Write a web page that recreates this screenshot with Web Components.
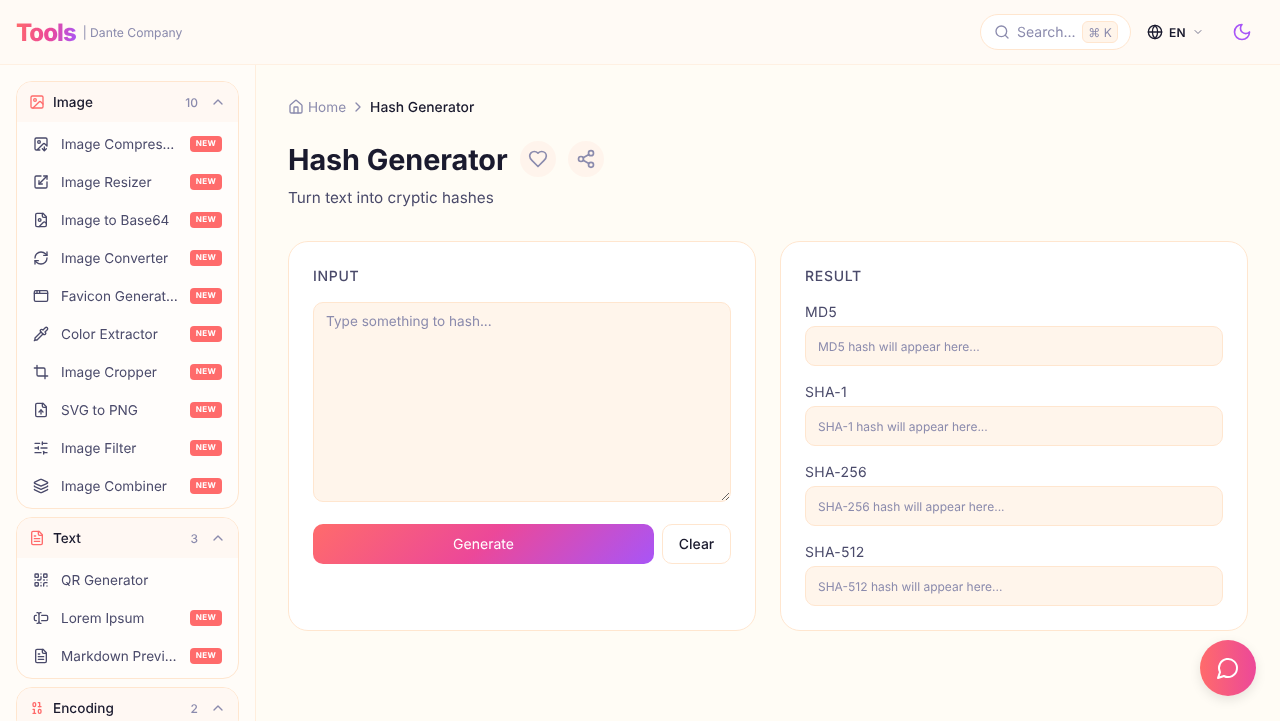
<!DOCTYPE html>
<html lang="en">
<head>
<meta charset="utf-8">
<title>Hash Generator</title>
<style>
html, body {
	margin: 0;
	height: 100%;
	overflow: hidden;
}
body {
	font-family: Inter, "Liberation Sans", sans-serif;
	text-rendering: geometricPrecision;
	will-change: transform;
	color: #1a1a2e;
	background: #fffcf5;
	display: flex;
	flex-direction: column;
}
</style>
</head>
<body>
<top-bar></top-bar>
<div style="display:flex;flex:1;min-height:0">
	<side-bar>
		<tool-group name="Image" icon="image" count="10">
			<tool-item icon="image-down" new>Image Compressor</tool-item>
			<tool-item icon="scaling" new>Image Resizer</tool-item>
			<tool-item icon="file-image" new>Image to Base64</tool-item>
			<tool-item icon="refresh" new>Image Converter</tool-item>
			<tool-item icon="app-window" new>Favicon Generator</tool-item>
			<tool-item icon="pipette" new>Color Extractor</tool-item>
			<tool-item icon="crop" new>Image Cropper</tool-item>
			<tool-item icon="file-up" new>SVG to PNG</tool-item>
			<tool-item icon="sliders" new>Image Filter</tool-item>
			<tool-item icon="layers" new>Image Combiner</tool-item>
		</tool-group>
		<tool-group name="Text" icon="file-text" count="3">
			<tool-item icon="qr">QR Generator</tool-item>
			<tool-item icon="text-cursor" new>Lorem Ipsum</tool-item>
			<tool-item icon="file-text" new>Markdown Preview</tool-item>
		</tool-group>
		<tool-group name="Encoding" icon="binary" count="2"></tool-group>
	</side-bar>
	<hash-page></hash-page>
</div>
<chat-fab></chat-fab>

<script>
(() => {
	const FILE = `<path d="M15 2H6a2 2 0 0 0-2 2v16a2 2 0 0 0 2 2h12a2 2 0 0 0 2-2V7Z"/><path d="M14 2v4a2 2 0 0 0 2 2h4"/>`;
	const ICONS = {
		image: `<rect x="3" y="3" width="18" height="18" rx="2"/><circle cx="9" cy="9" r="2"/><path d="m21 15-3.086-3.086a2 2 0 0 0-2.828 0L6 21"/>`,
		"image-down": `<path d="M10.3 21H5a2 2 0 0 1-2-2V5a2 2 0 0 1 2-2h14a2 2 0 0 1 2 2v10l-3.1-3.1a2 2 0 0 0-2.814.014L6 21"/><path d="m14 19 3 3v-5.5"/><path d="m17 22 3-3"/><circle cx="9" cy="9" r="2"/>`,
		scaling: `<path d="M12 3H5a2 2 0 0 0-2 2v14a2 2 0 0 0 2 2h14a2 2 0 0 0 2-2v-7"/><path d="M14 15H9v-5"/><path d="M16 3h5v5"/><path d="M21 3 9 15"/>`,
		"file-image": FILE + `<circle cx="10" cy="12" r="2"/><path d="m20 17-1.296-1.296a2.41 2.41 0 0 0-3.408 0L9 22"/>`,
		refresh: `<path d="M3 12a9 9 0 0 1 9-9 9.75 9.75 0 0 1 6.74 2.74L21 8"/><path d="M21 3v5h-5"/><path d="M21 12a9 9 0 0 1-9 9 9.75 9.75 0 0 1-6.74-2.74L3 16"/><path d="M8 16H3v5"/>`,
		"app-window": `<rect x="2" y="4" width="20" height="16" rx="2"/><path d="M10 4v4"/><path d="M2 8h20"/><path d="M6 4v4"/>`,
		pipette: `<path d="m2 22 1-1h3l9-9"/><path d="M3 21v-3l9-9"/><path d="m15 6 3.4-3.4a2.1 2.1 0 1 1 3 3L18 9l.4.4a2.1 2.1 0 1 1-3 3l-3.8-3.8a2.1 2.1 0 1 1 3-3l.4.4Z"/>`,
		crop: `<path d="M6 2v14a2 2 0 0 0 2 2h14"/><path d="M18 22V8a2 2 0 0 0-2-2H2"/>`,
		"file-up": FILE + `<path d="M12 12v6"/><path d="m15 15-3-3-3 3"/>`,
		sliders: `<path d="M10 5H3"/><path d="M12 19H3"/><path d="M14 3v4"/><path d="M16 17v4"/><path d="M21 12h-9"/><path d="M21 19h-5"/><path d="M21 5h-7"/><path d="M8 10v4"/><path d="M8 12H3"/>`,
		layers: `<path d="M12.83 2.18a2 2 0 0 0-1.66 0L2.6 6.08a1 1 0 0 0 0 1.83l8.58 3.91a2 2 0 0 0 1.66 0l8.58-3.9a1 1 0 0 0 0-1.83z"/><path d="M2 12a1 1 0 0 0 .58.91l8.6 3.91a2 2 0 0 0 1.65 0l8.58-3.9A1 1 0 0 0 22 12"/><path d="M2 17a1 1 0 0 0 .58.91l8.6 3.91a2 2 0 0 0 1.65 0l8.58-3.9A1 1 0 0 0 22 17"/>`,
		"file-text": FILE + `<path d="M10 9H8"/><path d="M16 13H8"/><path d="M16 17H8"/>`,
		qr: `<rect x="3" y="3" width="5" height="5" rx="1"/><rect x="16" y="3" width="5" height="5" rx="1"/><rect x="3" y="16" width="5" height="5" rx="1"/><path d="M21 16h-3a2 2 0 0 0-2 2v3"/><path d="M21 21v.01"/><path d="M12 7v3a2 2 0 0 1-2 2H7"/><path d="M3 12h.01"/><path d="M12 3h.01"/><path d="M12 16v.01"/><path d="M16 12h1"/><path d="M21 12v.01"/><path d="M12 21v-1"/>`,
		"text-cursor": `<path d="M12 20h-1a2 2 0 0 1-2-2 2 2 0 0 1-2 2H6"/><path d="M13 8h7a2 2 0 0 1 2 2v4a2 2 0 0 1-2 2h-7"/><path d="M5 16H4a2 2 0 0 1-2-2v-4a2 2 0 0 1 2-2h1"/><path d="M6 4h1a2 2 0 0 1 2 2 2 2 0 0 1 2-2h1"/><path d="M9 6v12"/>`,
		binary: `<rect x="14" y="14" width="4" height="6" rx="2"/><rect x="6" y="4" width="4" height="6" rx="2"/><path d="M6 20h4"/><path d="M14 10h4"/><path d="M6 14h2v6"/><path d="M14 4h2v6"/>`,
		search: `<path d="m21 21-4.34-4.34"/><circle cx="11" cy="11" r="8"/>`,
		globe: `<circle cx="12" cy="12" r="10"/><path d="M12 2a14.5 14.5 0 0 0 0 20 14.5 14.5 0 0 0 0-20"/><path d="M2 12h20"/>`,
		"chevron-down": `<path d="m6 9 6 6 6-6"/>`,
		"chevron-up": `<path d="m18 15-6-6-6 6"/>`,
		"chevron-right": `<path d="m9 18 6-6-6-6"/>`,
		moon: `<path d="M12 3a6 6 0 0 0 9 9 9 9 0 1 1-9-9Z"/>`,
		house: `<path d="M15 21v-8a1 1 0 0 0-1-1h-4a1 1 0 0 0-1 1v8"/><path d="M3 10a2 2 0 0 1 .709-1.528l7-5.999a2 2 0 0 1 2.582 0l7 5.999A2 2 0 0 1 21 10v9a2 2 0 0 1-2 2H5a2 2 0 0 1-2-2z"/>`,
		heart: `<path d="M19 14c1.49-1.46 3-3.21 3-5.5A5.5 5.5 0 0 0 16.5 3c-1.76 0-3 .5-4.5 2-1.5-1.5-2.74-2-4.5-2A5.5 5.5 0 0 0 2 8.5c0 2.3 1.5 4.05 3 5.5l7 7Z"/>`,
		share: `<circle cx="18" cy="5" r="3"/><circle cx="6" cy="12" r="3"/><circle cx="18" cy="19" r="3"/><path d="m8.59 13.51 6.83 3.98"/><path d="m15.41 6.51-6.82 3.98"/>`,
		message: `<path d="M7.9 20A9 9 0 1 0 4 16.1L2 22Z"/>`,
	};

	const BORDER = "#ffe6cf";
	const FIELD = "#fff5eb";
	const MUTED = "#8b8bad";
	const BODY = "#4a4a6a";

	/** Small base so every element just declares its markup. */
	function define(tag, html) {
		customElements.define(
			tag,
			class extends HTMLElement {
				constructor() {
					super();
					this.attachShadow({ mode: "open" }).innerHTML = html;
				}
			},
		);
	}

	customElements.define(
		"ui-icon",
		class extends HTMLElement {
			constructor() {
				super();
				const size = this.getAttribute("size") || 16;
				this.attachShadow({ mode: "open" }).innerHTML = `
<style>
:host { display: inline-flex; flex: none; width: ${size}px; height: ${size}px; }
svg { display: block; }
</style>
<svg width="${size}" height="${size}" viewBox="0 0 24 24" fill="none" stroke="currentColor" stroke-width="2" stroke-linecap="round" stroke-linejoin="round">${ICONS[this.getAttribute("name")] || ""}</svg>`;
			}
		},
	);

	define("top-bar", `
<style>
:host {
	display: flex;
	flex: none;
	align-items: center;
	box-sizing: border-box;
	height: 65px;
	padding: 0 28px 0 16px;
	background: #fffaf5;
	border-bottom: 1px solid #fff0e2;
}
.logo {
	font-size: 24px;
	font-weight: 800;
	letter-spacing: -1px;
	background: linear-gradient(100deg, #ff6b6b, #ec4899 55%, #a855f7);
	-webkit-background-clip: text;
	background-clip: text;
	color: transparent;
}
.tag { margin-left: 7px; font-size: 12.16px; color: ${MUTED}; }
.spacer { flex: 1; }
.search {
	display: flex;
	align-items: center;
	box-sizing: border-box;
	width: 151px;
	height: 36px;
	padding: 0 12px 0 13px;
	background: #fff;
	border: 1px solid ${BORDER};
	border-radius: 18px;
	color: ${MUTED};
	font-size: 14px;
}
.search span { margin-left: 7px; flex: 1; white-space: nowrap; }
kbd {
	font: inherit;
	font-size: 12px;
	box-sizing: border-box;
	height: 22px;
	width: 36px;
	display: flex;
	align-items: center;
	justify-content: center;
	background: ${FIELD};
	border: 1px solid ${BORDER};
	border-radius: 6px;
	white-space: nowrap;
}
.lang {
	display: flex;
	align-items: center;
	margin-left: 16px;
	font-size: 12px;
	font-weight: 600;
	letter-spacing: 0.3px;
	color: #1a1a2e;
}
.lang b { font-weight: 600; margin: 0 6px; }
.lang ui-icon:last-child { color: #777790; }
.moon { margin-left: 28px; color: #a855f7; display: flex; }
</style>
<div class="logo">Tools</div>
<div class="tag">| Dante Company</div>
<div class="spacer"></div>
<div class="search"><ui-icon name="search"></ui-icon><span>Search...</span><kbd>⌘ K</kbd></div>
<div class="lang"><ui-icon name="globe"></ui-icon><b>EN</b><ui-icon name="chevron-down" size="12"></ui-icon></div>
<div class="moon"><ui-icon name="moon" size="20"></ui-icon></div>
`);

	define("side-bar", `
<style>
:host {
	display: flex;
	flex: none;
	flex-direction: column;
	box-sizing: border-box;
	width: 256px;
	gap: 8px;
	padding: 16px 16px 0;
	overflow: hidden;
	background: #fffcf8;
	border-right: 1px solid #ffeedd;
}
</style>
<slot></slot>
`);

	customElements.define(
		"tool-group",
		class extends HTMLElement {
			constructor() {
				super();
				this.attachShadow({ mode: "open" }).innerHTML = `
<style>
:host {
	display: block;
	flex: none;
	background: #fffdfb;
	border: 1px solid ${BORDER};
	border-radius: 16px;
	overflow: hidden;
}
header {
	display: flex;
	align-items: center;
	height: 40px;
	padding: 0 12px;
	background: #fff8f3;
	font-size: 13.6px;
	font-weight: 500;
}
header > ui-icon:first-child { color: #ff6b6b; }
.name { flex: 1; margin-left: 8px; padding-top: 2px; }
.count { font-size: 12px; color: ${MUTED}; margin-right: 12px; }
header > ui-icon:last-child { color: ${MUTED}; }
.list { padding: 3px 0; }
</style>
<header>
	<ui-icon name="${this.getAttribute("icon")}"></ui-icon>
	<span class="name">${this.getAttribute("name")}</span>
	<span class="count">${this.getAttribute("count")}</span>
	<ui-icon name="chevron-up"></ui-icon>
</header>
<div class="list"><slot></slot></div>`;
			}
		},
	);

	customElements.define(
		"tool-item",
		class extends HTMLElement {
			constructor() {
				super();
				const badge = this.hasAttribute("new") ? `<span class="new">NEW</span>` : "";
				this.attachShadow({ mode: "open" }).innerHTML = `
<style>
:host {
	display: flex;
	align-items: center;
	height: 38px;
	padding: 0 16px;
	color: ${BODY};
	font-size: 13.6px;
}
.label {
	flex: 1;
	min-width: 0;
	margin-left: 12px;
	margin-right: 12px;
	padding-top: 2px;
	white-space: nowrap;
	overflow: hidden;
	text-overflow: ellipsis;
}
.new {
	flex: none;
	box-sizing: border-box;
	width: 32px;
	height: 16px;
	line-height: 15px;
	text-align: center;
	background: #ff6b6b;
	color: #fff;
	border-radius: 4px;
	font-size: 8px;
	font-weight: 700;
	letter-spacing: 0.4px;
}
</style>
<ui-icon name="${this.getAttribute("icon")}"></ui-icon>
<span class="label"><slot></slot></span>${badge}`;
			}
		},
	);

	define("bread-crumb", `
<style>
:host { display: flex; align-items: center; height: 20px; font-size: 13.6px; color: ${MUTED}; }
span { padding-top: 2px; }
.home { margin-left: 4px; }
.sep { margin: 0 4px; padding: 0; display: flex; }
.here { color: #1a1a2e; font-size: 13.87px; font-weight: 500; }
</style>
<ui-icon name="house"></ui-icon><span class="home">Home</span>
<span class="sep"><ui-icon name="chevron-right"></ui-icon></span>
<span class="here"><slot></slot></span>
`);

	customElements.define(
		"round-button",
		class extends HTMLElement {
			constructor() {
				super();
				this.attachShadow({ mode: "open" }).innerHTML = `
<style>
:host {
	display: flex;
	align-items: center;
	justify-content: center;
	width: 36px;
	height: 36px;
	border-radius: 50%;
	background: #fff4ec;
	color: ${MUTED};
}
</style>
<ui-icon name="${this.getAttribute("icon")}" size="20"></ui-icon>`;
			}
		},
	);

	define("panel-card", `
<style>
:host {
	display: block;
	box-sizing: border-box;
	padding: 24px;
	background: #fff;
	border: 1px solid ${BORDER};
	border-radius: 20px;
}
h2 {
	margin: 0 0 14px;
	font-size: 14px;
	line-height: 22px;
	font-weight: 500;
	letter-spacing: 0.7px;
	text-transform: uppercase;
	color: ${BODY};
}
</style>
<h2><slot name="title"></slot></h2>
<slot></slot>
`);

	customElements.define(
		"hash-field",
		class extends HTMLElement {
			constructor() {
				super();
				const name = this.getAttribute("name");
				this.attachShadow({ mode: "open" }).innerHTML = `
<style>
:host { display: block; margin-bottom: 16px; }
:host(:last-child) { margin-bottom: 0; }
label { display: block; height: 24px; line-height: 22px; font-size: 14px; letter-spacing: 0.25px; color: ${BODY}; }
div {
	box-sizing: border-box;
	height: 40px;
	line-height: 39px;
	padding: 0 12px;
	background: ${FIELD};
	border: 1px solid ${BORDER};
	border-radius: 10px;
	font-size: 12px;
	color: ${MUTED};
}
</style>
<label>${name}</label>
<div>${name} hash will appear here...</div>`;
			}
		},
	);

	define("hash-page", `
<style>
:host {
	display: block;
	flex: 1;
	min-width: 0;
	box-sizing: border-box;
	padding: 32px;
}
.title { display: flex; align-items: center; gap: 12px; margin-top: 24px; height: 36px; }
h1 { margin: 0; padding-top: 2px; font-size: 28.8px; line-height: 36px; font-weight: 700; letter-spacing: -0.08px; }
.sub { margin: 9px 0 0; font-size: 15.3px; line-height: 24px; color: ${BODY}; }
.cards { display: grid; grid-template-columns: 1fr 1fr; gap: 24px; margin-top: 31px; height: 390px; }
textarea {
	display: block;
	box-sizing: border-box;
	width: 100%;
	height: 200px;
	padding: 9px 12px 7px;
	background: ${FIELD};
	border: 1px solid ${BORDER};
	border-radius: 10px;
	outline: none;
	font: 13.6px/20px Inter, "Liberation Sans", sans-serif;
	text-rendering: geometricPrecision;
	color: #1a1a2e;
	resize: vertical;
}
textarea::placeholder { color: ${MUTED}; opacity: 1; }
.actions { display: flex; gap: 8px; margin-top: 22px; }
button {
	height: 40px;
	border-radius: 10px;
	font: 500 14px Inter, "Liberation Sans", sans-serif;
	text-rendering: geometricPrecision;
	cursor: pointer;
}
.go {
	flex: 1;
	border: 0;
	color: #fff;
	font-weight: 400;
	background: linear-gradient(135deg, #ff6b6b, #ec4899, #a855f7);
}
.clear { width: 69px; padding: 0; background: #fff; color: #1a1a2e; border: 1px solid ${BORDER}; }
</style>
<bread-crumb>Hash Generator</bread-crumb>
<div class="title">
	<h1>Hash Generator</h1>
	<round-button icon="heart"></round-button>
	<round-button icon="share"></round-button>
</div>
<p class="sub">Turn text into cryptic hashes</p>
<div class="cards">
	<panel-card>
		<span slot="title">Input</span>
		<textarea placeholder="Type something to hash..."></textarea>
		<div class="actions">
			<button class="go">Generate</button>
			<button class="clear">Clear</button>
		</div>
	</panel-card>
	<panel-card>
		<span slot="title">Result</span>
		<hash-field name="MD5"></hash-field>
		<hash-field name="SHA-1"></hash-field>
		<hash-field name="SHA-256"></hash-field>
		<hash-field name="SHA-512"></hash-field>
	</panel-card>
</div>
`);

	define("chat-fab", `
<style>
:host {
	position: fixed;
	right: 24px;
	bottom: 25px;
	display: flex;
	align-items: center;
	justify-content: center;
	width: 56px;
	height: 56px;
	border-radius: 50%;
	color: #fff;
	background: linear-gradient(90deg, #ff6b6b, #ec4899);
	box-shadow: 0 4px 12px rgba(0, 0, 0, 0.1);
}
</style>
<ui-icon name="message" size="24"></ui-icon>
`);
})();
</script>
</body>
</html>
